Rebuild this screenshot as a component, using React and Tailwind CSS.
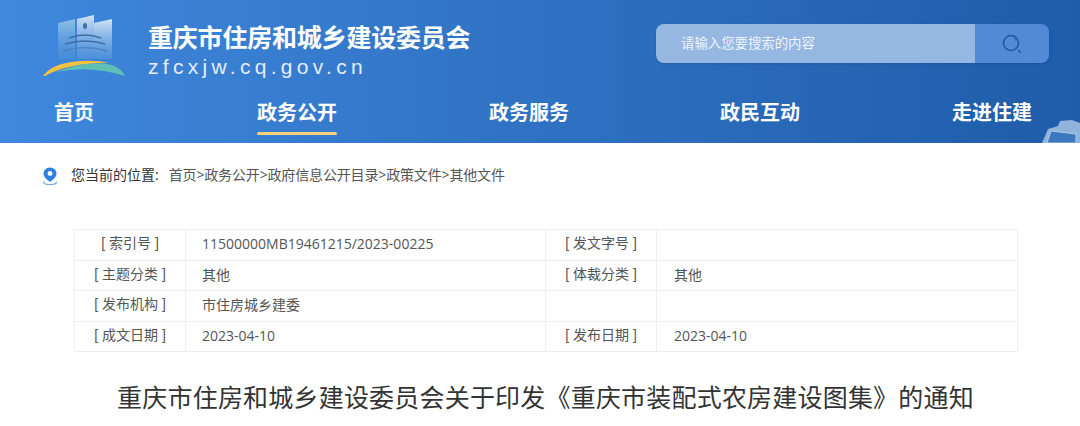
const FONT = "font-['Open_Sans','Noto_Sans_CJK_SC',sans-serif]";

const navItems = [
    { name: '首页', cls: 'ml-[54px]' },
    { name: '政务公开', cls: 'ml-[163px]', active: true },
    { name: '政务服务', cls: 'ml-[152px]' },
    { name: '政民互动', cls: 'ml-[151px]' },
    { name: '走进住建', cls: 'ml-[152px]' },
];

const rows = [
    ['[ 索引号 ]', '11500000MB19461215/2023-00225', '[ 发文字号 ]', ''],
    ['[ 主题分类 ]', '其他', '[ 体裁分类 ]', '其他'],
    ['[ 发布机构 ]', '市住房城乡建委', '', ''],
    ['[ 成文日期 ]', '2023-04-10', '[ 发布日期 ]', '2023-04-10'],
];

const cellAlign = [
    "justify-center font-['Liberation_Sans','Noto_Sans_CJK_SC',sans-serif]",
    'pl-[16px]',
    "justify-center font-['Liberation_Sans','Noto_Sans_CJK_SC',sans-serif]",
    'pl-[17px]',
];

function Logo() {
    return (
        <svg width="86" height="64" viewBox="0 0 86 64" className="shrink-0">
            <defs>
                <linearGradient id="bld" x1="0" y1="0" x2="0" y2="1">
                    <stop offset="0" stopColor="#d3e4f5" />
                    <stop offset="1" stopColor="#7fb2e2" stopOpacity="0.25" />
                </linearGradient>
                <linearGradient id="bldL" x1="0" y1="0" x2="0" y2="1">
                    <stop offset="0" stopColor="#8cc0e6" />
                    <stop offset="1" stopColor="#5f9fdc" stopOpacity="0.25" />
                </linearGradient>
            </defs>
            <path d="M16 8 L33 4 L33 44 L16 44 Z" fill="url(#bldL)" />
            <path d="M35 4 L52 0 L52 44 L35 44 Z" fill="url(#bld)" />
            <path d="M52 8 L70 4 L70 44 L52 44 Z" fill="url(#bld)" />
            <ellipse cx="43" cy="11" rx="2" ry="3" fill="#3f6ea8" />
            <path d="M27 23 Q43 17 59 23" fill="none" stroke="#3f6ea8" strokeWidth="1.6" />
            <path d="M23 29 Q43 23 63 29" fill="none" stroke="#3f6ea8" strokeWidth="1.6" />
            <path d="M21 36 Q43 29 65 36" fill="none" stroke="#4f7cb4" strokeWidth="1.6" opacity="0.8" />
            <path d="M1 61 Q10 48 38 46 Q56 45 66 48 Q26 48 3 61 Z" fill="#f2c23e" />
            <path d="M14 57 Q44 45 70 50 Q80 54 83 61 Q48 50 14 57 Z" fill="#5fbfb4" />
        </svg>
    );
}

export default function App() {
    return (
        <div className={`w-[1080px] h-[426px] overflow-hidden bg-white ${FONT}`}>
            {/* header */}
            <header className="relative h-[143px] overflow-hidden bg-gradient-to-r from-[#3f88dd] to-[#1f5ca9]">
                <div className="flex h-[97px]">
                    <div className="ml-[42px] mt-[15px]">
                        <Logo />
                    </div>
                    <div className="ml-[20px] mt-[20px] flex flex-col">
                        <h1 className="text-[25px] leading-[34px] tracking-[-0.2px] font-bold text-white">重庆市住房和城乡建设委员会</h1>
                        <p className="text-[21px] leading-[26px] tracking-[4.3px] font-['Liberation_Sans',sans-serif] text-[#e3eefa]">zfcxjw.cq.gov.cn</p>
                    </div>
                    <div className="ml-auto mr-[31px] mt-[24px] flex h-[39px] w-[393px] overflow-hidden rounded-lg shadow-sm">
                        <div className="flex flex-1 items-center bg-[#95b7e2] pl-[25px] text-[13.4px] text-[#edf3fb]">请输入您要搜索的内容</div>
                        <div className="flex w-[74px] items-center justify-center bg-[#528ad6]">
                            <svg width="22" height="22" viewBox="0 0 22 22" fill="none" stroke="#22589f">
                                <circle cx="10" cy="10" r="7.5" strokeWidth="1.5" />
                                <path d="M13 4.8 A6 6 0 0 1 15.2 8" strokeWidth="1" />
                                <path d="M17 17 L20 20" strokeWidth="1.5" />
                            </svg>
                        </div>
                    </div>
                </div>
                <nav className="flex">
                    {navItems.map((item) => (
                        <div key={item.name} className={`${item.cls} relative h-[38px] text-[20px] leading-[32px] font-bold text-white`}>
                            {item.name}
                            {item.active && <div className="absolute bottom-0 left-0 right-0 h-[3px] rounded-sm bg-[#f5d27a]"></div>}
                        </div>
                    ))}
                </nav>
                <svg width="40" height="28" viewBox="0 0 40 28" className="absolute bottom-0 right-0">
                    <path d="M2 28 L8 14 L18 11 L20 6 L32 5 L40 8 L40 28 Z" fill="#8fb3dc" />
                    <path d="M7 28 L11 16 L36 19 L36 28 Z" fill="#3d77bf" stroke="#b2cbe8" />
                </svg>
            </header>

            {/* breadcrumb */}
            <div className="mt-[20px] flex h-[22px] items-center text-[14px] text-[#555555]">
                <svg width="16" height="18" viewBox="0 0 16 18" className="ml-[42px] mt-[3px]">
                    <path d="M8 0.5 C3.8 0.5 1.5 3.6 1.5 6.6 C1.5 10 5 13 8 15 C11 13 14.5 10 14.5 6.6 C14.5 3.6 12.2 0.5 8 0.5 Z" fill="#2f80e4" />
                    <circle cx="8" cy="6.5" r="2.4" fill="#ffffff" />
                    <path d="M2 14.5 Q0.5 17.5 8 17.5 Q15.5 17.5 14 14.5" fill="none" stroke="#6fa9ec" strokeWidth="1.2" />
                </svg>
                <span className="ml-[13px] text-[#333333]">您当前的位置:</span>
                <span className="ml-[10px] tracking-[-0.15px]">首页&gt;政务公开&gt;政府信息公开目录&gt;政策文件&gt;其他文件</span>
            </div>

            {/* info table */}
            <div className="ml-[74px] mt-[44px] grid w-[944px] grid-cols-[111px_360px_111px_361px] border-t border-l border-[#efefef] text-[14px] text-[#555555]">
                {rows.map((row, i) =>
                    row.map((cell, j) => (
                        <div
                            key={`${i}-${j}`}
                            className={`flex h-[30.5px] items-center border-r border-b border-[#efefef] pb-[2px] ${cellAlign[j]}`}
                        >
                            {cell}
                        </div>
                    ))
                )}
            </div>

            {/* title */}
            <h2 className="ml-[74px] mt-[27px] w-[943px] text-center text-[25px] leading-[36px] tracking-[0.2px] font-normal text-[#333333]">
                重庆市住房和城乡建设委员会关于印发《重庆市装配式农房建设图集》的通知
            </h2>
        </div>
    );
}
